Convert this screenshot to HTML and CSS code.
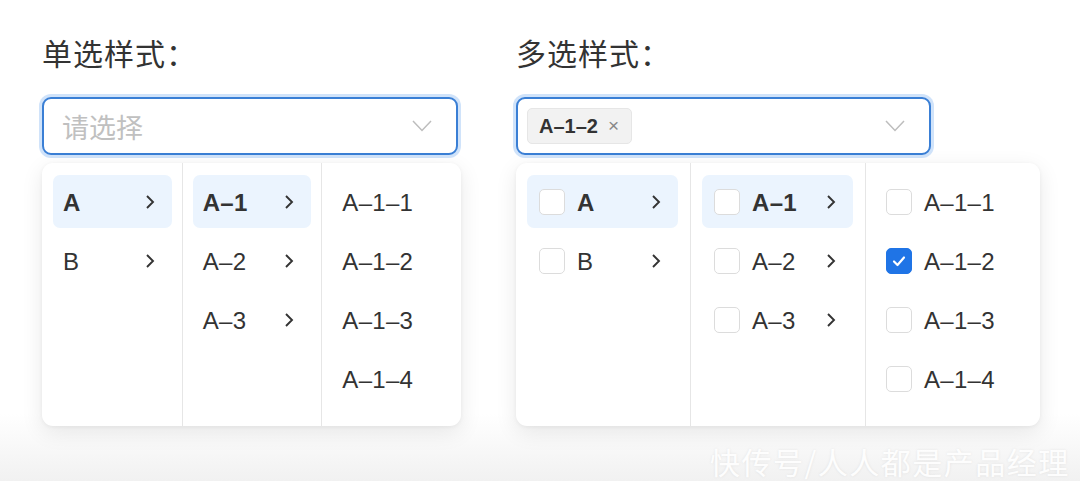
FILE: index.html
```html
<!DOCTYPE html>
<html lang="zh-CN">
<head>
    <meta charset="UTF-8">
    <meta name="viewport" content="width=device-width, initial-scale=1.0">
    <title>级联选择样式</title>
    <link rel="stylesheet" href="styles.css">
</head>
<body>
    <div class="page">
        <!-- 单选 -->
        <section class="demo demo-single">
            <h3 class="demo-title">单选样式：</h3>
            <div class="select">
                <span class="placeholder">请选择</span>
                <svg class="arrow-down" width="20" height="12" viewBox="0 0 20 12"><path d="M1 1 L10 10.5 L19 1" /></svg>
            </div>
            <div class="cascader">
                <ul class="column">
                    <li class="option active"><span class="label">A</span><svg class="arrow" width="10" height="16" viewBox="0 0 10 16"><path d="M2 2 L8 8 L2 14" /></svg></li>
                    <li class="option"><span class="label">B</span><svg class="arrow" width="10" height="16" viewBox="0 0 10 16"><path d="M2 2 L8 8 L2 14" /></svg></li>
                </ul>
                <ul class="column">
                    <li class="option active"><span class="label">A–1</span><svg class="arrow" width="10" height="16" viewBox="0 0 10 16"><path d="M2 2 L8 8 L2 14" /></svg></li>
                    <li class="option"><span class="label">A–2</span><svg class="arrow" width="10" height="16" viewBox="0 0 10 16"><path d="M2 2 L8 8 L2 14" /></svg></li>
                    <li class="option"><span class="label">A–3</span><svg class="arrow" width="10" height="16" viewBox="0 0 10 16"><path d="M2 2 L8 8 L2 14" /></svg></li>
                </ul>
                <ul class="column">
                    <li class="option"><span class="label">A–1–1</span></li>
                    <li class="option"><span class="label">A–1–2</span></li>
                    <li class="option"><span class="label">A–1–3</span></li>
                    <li class="option"><span class="label">A–1–4</span></li>
                </ul>
            </div>
        </section>

        <!-- 多选 -->
        <section class="demo demo-multi">
            <h3 class="demo-title">多选样式：</h3>
            <div class="select">
                <span class="tag">A–1–2<span class="tag-close">×</span></span>
                <svg class="arrow-down" width="20" height="12" viewBox="0 0 20 12"><path d="M1 1 L10 10.5 L19 1" /></svg>
            </div>
            <div class="cascader">
                <ul class="column">
                    <li class="option active"><span class="checkbox"></span><span class="label">A</span><svg class="arrow" width="10" height="16" viewBox="0 0 10 16"><path d="M2 2 L8 8 L2 14" /></svg></li>
                    <li class="option"><span class="checkbox"></span><span class="label">B</span><svg class="arrow" width="10" height="16" viewBox="0 0 10 16"><path d="M2 2 L8 8 L2 14" /></svg></li>
                </ul>
                <ul class="column">
                    <li class="option active"><span class="checkbox"></span><span class="label">A–1</span><svg class="arrow" width="10" height="16" viewBox="0 0 10 16"><path d="M2 2 L8 8 L2 14" /></svg></li>
                    <li class="option"><span class="checkbox"></span><span class="label">A–2</span><svg class="arrow" width="10" height="16" viewBox="0 0 10 16"><path d="M2 2 L8 8 L2 14" /></svg></li>
                    <li class="option"><span class="checkbox"></span><span class="label">A–3</span><svg class="arrow" width="10" height="16" viewBox="0 0 10 16"><path d="M2 2 L8 8 L2 14" /></svg></li>
                </ul>
                <ul class="column">
                    <li class="option"><span class="checkbox"></span><span class="label">A–1–1</span></li>
                    <li class="option"><span class="checkbox checked"><svg width="14" height="12" viewBox="0 0 14 12"><path d="M2 6.5 L5.5 10 L12 2.5" /></svg></span><span class="label">A–1–2</span></li>
                    <li class="option"><span class="checkbox"></span><span class="label">A–1–3</span></li>
                    <li class="option"><span class="checkbox"></span><span class="label">A–1–4</span></li>
                </ul>
            </div>
        </section>
    </div>

    <div class="watermark">快传号/人人都是产品经理</div>
</body>
</html>
```

FILE: styles.css
```css
body {
    font-family: 'Liberation Sans', 'Noto Sans CJK SC', sans-serif;
    background: linear-gradient(to bottom, #ffffff 86%, #f1f1f1 100%);
    color: #333;
    margin: 0;
    height: 481px;
    overflow: hidden;
    position: relative;
}

.page {
    display: flex;
    gap: 55px;
    padding: 32px 0 0 42px;
}

.demo-single {
    width: 419px;
}

.demo-multi {
    width: 524px;
}

.demo-title {
    margin: 0 0 25px;
    font-size: 30px;
    font-weight: 400;
    line-height: 40px;
    color: #333;
    font-family: 'Noto Sans CJK SC', sans-serif;
    letter-spacing: 1px;
}

.select {
    box-sizing: border-box;
    width: 416px;
    height: 58px;
    border: 2px solid #3a7fd5;
    border-radius: 9px;
    box-shadow: 0 0 0 3px rgba(120, 175, 240, 0.35);
    display: flex;
    align-items: center;
    padding: 0 24px 0 18px;
    background: #fff;
}

.placeholder {
    flex: 1;
    font-family: 'Noto Sans CJK SC', sans-serif;
    font-size: 27px;
    color: #c0c0c0;
}

.arrow-down {
    margin-left: auto;
}

.arrow-down path {
    fill: none;
    stroke: #bdbdbd;
    stroke-width: 1.5;
}

.demo-multi .select {
    width: 415px;
    padding-left: 9px;
}

.tag {
    display: flex;
    align-items: center;
    gap: 10px;
    height: 36px;
    box-sizing: border-box;
    padding: 0 12px 0 11px;
    background: #f2f2f2;
    border: 1px solid #e6e6e6;
    border-radius: 5px;
    font-size: 20px;
    font-weight: 600;
    color: #333;
}

.tag-close {
    font-size: 19px;
    color: #888;
    font-weight: 400;
}

.cascader {
    margin-top: 8px;
    height: 263px;
    display: flex;
    background: #fff;
    border-radius: 11px;
    box-shadow: 0 6px 22px rgba(0, 0, 0, 0.09), 0 1px 4px rgba(0, 0, 0, 0.05);
    overflow: hidden;
}

.column {
    list-style: none;
    margin: 0;
    padding: 12px 10px;
    flex: 1;
    border-left: 1px solid #e6e6e6;
    display: flex;
    flex-direction: column;
    gap: 6px;
}

.column:first-child {
    border-left: none;
    padding-left: 11px;
}

.option {
    height: 53px;
    display: flex;
    align-items: center;
    padding: 3px 17px 0 10px;
    box-sizing: border-box;
    border-radius: 7px;
    font-size: 24px;
    color: #333;
}

.option.active {
    background: #ebf4fe;
}

.option.active .label {
    font-weight: 700;
}

.label {
    flex: 1;
    letter-spacing: 0.3px;
}

.arrow {
    margin-top: -3px;
}

.arrow path {
    fill: none;
    stroke: #333;
    stroke-width: 1.9;
}

.checkbox {
    box-sizing: border-box;
    width: 26px;
    height: 26px;
    border: 1.5px solid #dcdcdc;
    border-radius: 5px;
    background: #fff;
    margin: -3px 12px 0 0;
    display: flex;
    align-items: center;
    justify-content: center;
    flex-shrink: 0;
}

.checkbox.checked {
    background: #1f74e6;
    border-color: #1f74e6;
}

.checkbox path {
    fill: none;
    stroke: #fff;
    stroke-width: 2.2;
    stroke-linecap: round;
    stroke-linejoin: round;
}

.demo-multi .option {
    padding-left: 12px;
}

.demo-multi .column {
    padding-left: 11px;
    padding-right: 12px;
}

.demo-multi .column:last-child .option {
    padding-left: 9px;
}

.watermark {
    position: absolute;
    left: 710px;
    top: 439px;
    font-family: 'Noto Sans CJK SC', sans-serif;
    font-size: 30px;
    letter-spacing: 1.5px;
    color: rgba(255, 255, 255, 0.95);
    text-shadow: 0 0 3px rgba(0, 0, 0, 0.08);
    white-space: nowrap;
}
```
